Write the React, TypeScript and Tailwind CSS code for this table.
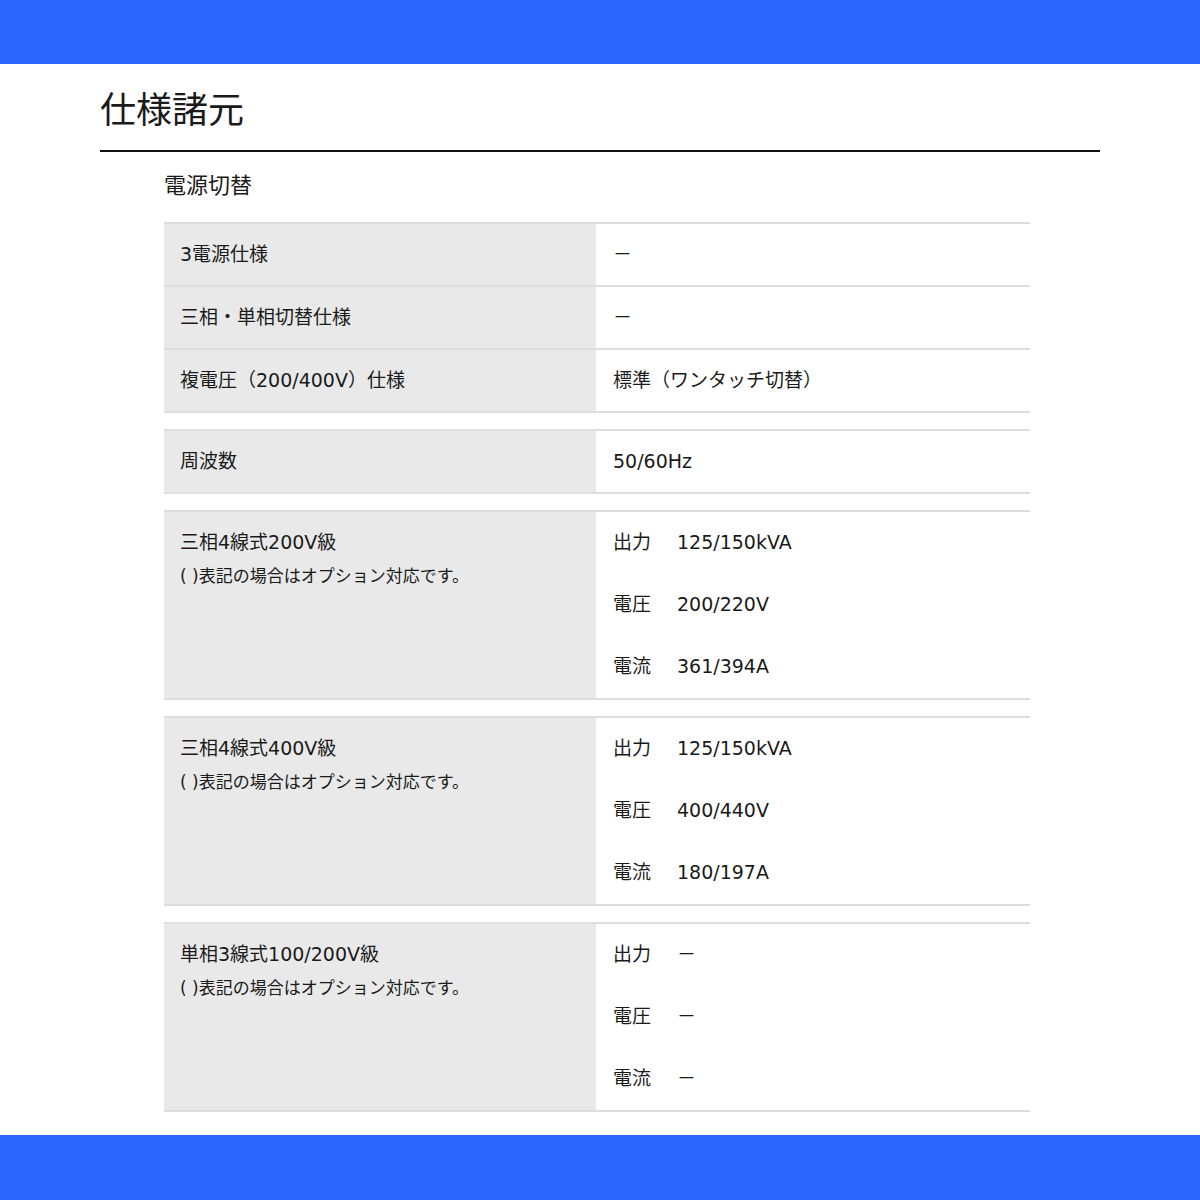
const font = { fontFamily: '"DejaVu Sans", "Noto Sans CJK JP", sans-serif' }

type Simple = { label: string; value: string }
type Multi = { label: string; values: [string, string][] }

const group1: Simple[] = [
    { label: '3電源仕様', value: '－' },
    { label: '三相・単相切替仕様', value: '－' },
    { label: '複電圧（200/400V）仕様', value: '標準（ワンタッチ切替）' },
]

const multiGroups: Multi[] = [
    {
        label: '三相4線式200V級',
        values: [['出力', '125/150kVA'], ['電圧', '200/220V'], ['電流', '361/394A']],
    },
    {
        label: '三相4線式400V級',
        values: [['出力', '125/150kVA'], ['電圧', '400/440V'], ['電流', '180/197A']],
    },
    {
        label: '単相3線式100/200V級',
        values: [['出力', '－'], ['電圧', '－'], ['電流', '－']],
    },
]

function SimpleGroup({ rows }: { rows: Simple[] }) {
    return (
        <div className="border-b-2 border-[#dedede]">
            {rows.map((r) => (
                <div key={r.label} className="grid grid-cols-[432px_434px] border-t-2 border-[#dedede] h-[63px]">
                    <div className="bg-[#e9e9e9] flex items-center pl-[16px] text-[19px]">{r.label}</div>
                    <div className="bg-white flex items-center pl-[17px] text-[19px]">{r.value}</div>
                </div>
            ))}
        </div>
    )
}

function MultiGroup({ g }: { g: Multi }) {
    return (
        <div className="grid grid-cols-[432px_434px] border-t-2 border-b-2 border-[#dedede]">
            <div className="bg-[#e9e9e9] pl-[16px] pt-[16px]">
                <div className="text-[19px] leading-[28px]">{g.label}</div>
                <div className="text-[17px] leading-[24px] mt-[8px]">( )表記の場合はオプション対応です。</div>
            </div>
            <div className="bg-white pl-[17px]">
                {g.values.map(([k, v]) => (
                    <div key={k} className="h-[62px] flex items-center pb-[2px] text-[19px]">
                        <span className="w-[64px]">{k}</span>
                        <span>{v}</span>
                    </div>
                ))}
            </div>
        </div>
    )
}

export default function App() {
    return (
        <div className="min-h-[1200px] flex flex-col bg-white text-[#1a1a1a]" style={font}>
            <div className="h-[64px] bg-[#2a66ff]" />
            <main className="flex-1 w-[1000px] mx-auto">
                <h1 className="text-[36px] leading-none pt-[29px] pb-[21px] border-b-2 border-[#111]">仕様諸元</h1>
                <div className="pl-[64px]">
                    <h2 className="text-[22px] leading-none mt-[23px] mb-[25px]">電源切替</h2>
                    <div className="w-[866px] flex flex-col gap-[16px]">
                        <SimpleGroup rows={group1} />
                        <SimpleGroup rows={[{ label: '周波数', value: '50/60Hz' }]} />
                        {multiGroups.map((g) => (
                            <MultiGroup key={g.label} g={g} />
                        ))}
                    </div>
                </div>
            </main>
            <div className="h-[65px] bg-[#2a66ff]" />
        </div>
    )
}
